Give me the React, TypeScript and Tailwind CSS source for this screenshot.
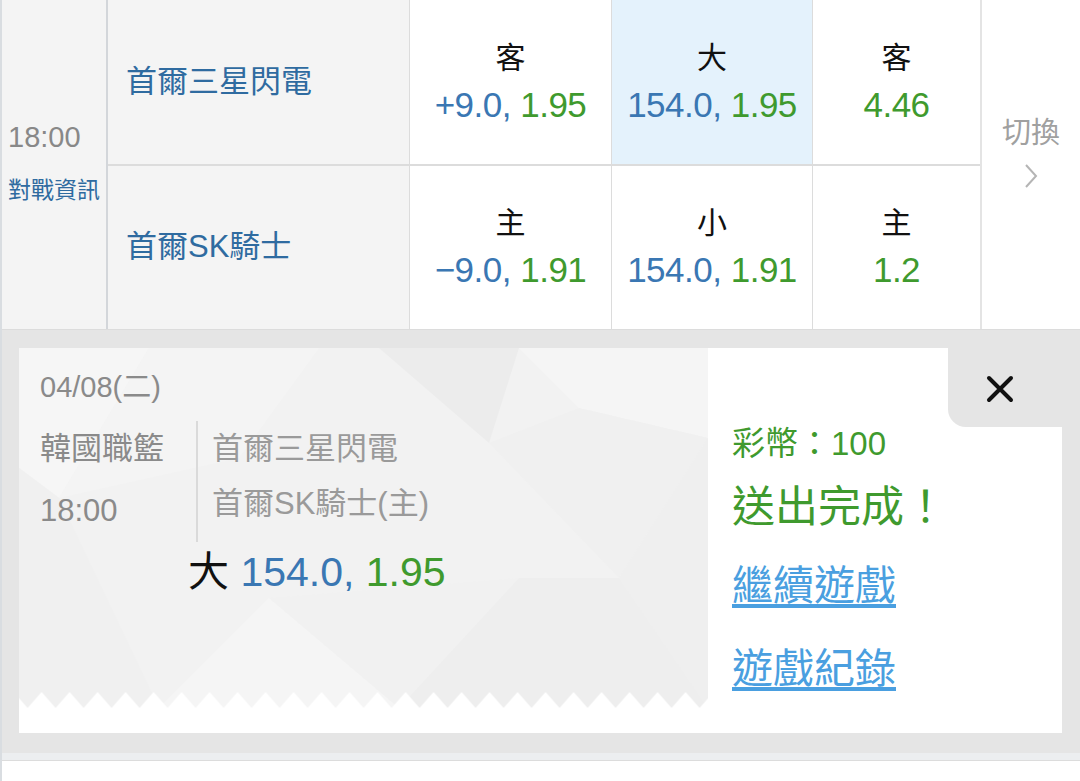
import React from "react";

const font = "font-['Liberation_Sans','Noto_Sans_CJK_TC',sans-serif]";

const blue = "text-[#3a77b3]";
const green = "text-[#3f9a2e]";

function OddsCell({
  label,
  line,
  price,
  width,
  active = false,
}: {
  label: string;
  line?: string;
  price: string;
  width: string;
  active?: boolean;
}) {
  return (
    <div
      className={`${width} flex flex-col items-center justify-center border-l border-[#dcdcdc] ${
        active ? "bg-[#e4f2fc]" : "bg-white"
      }`}
    >
      <span className="text-[30px] leading-[46px] text-[#111]">{label}</span>
      <span className="text-[35px] leading-[48px] tracking-[-0.5px]">
        {line && <span className={blue}>{line}, </span>}
        <span className={green}>{price}</span>
      </span>
    </div>
  );
}

function MatchRow({
  team,
  cells,
  last = false,
}: {
  team: string;
  cells: { label: string; line?: string; price: string; width: string; active?: boolean }[];
  last?: boolean;
}) {
  return (
    <div className={`flex flex-1 ${last ? "" : "border-b-2 border-[#dcdcdc]"}`}>
      <div className="w-[301px] flex items-center pl-[18px] bg-[#f4f4f4]">
        <span className="text-[31px] text-[#2f6ba0]">{team}</span>
      </div>
      {cells.map((c, i) => (
        <OddsCell key={i} {...c} />
      ))}
    </div>
  );
}

function TicketPattern() {
  return (
    <svg
      className="absolute inset-0"
      width="689"
      height="360"
      viewBox="0 0 689 360"
      preserveAspectRatio="none"
    >
      <rect width="689" height="360" fill="#f2f2f2" />
      <polygon points="0,0 130,0 40,150 0,120" fill="#f6f6f6" />
      <polygon points="130,0 300,0 220,110 40,150" fill="#f4f4f4" />
      <polygon points="360,0 500,0 470,95" fill="#ececec" />
      <polygon points="500,0 689,0 689,90 560,60" fill="#f5f5f5" />
      <polygon points="470,95 560,60 689,90 600,230" fill="#f0f0f0" />
      <polygon points="689,90 689,360 600,230" fill="#efefef" />
      <polygon points="0,120 40,150 140,360 0,360" fill="#f0f0f0" />
      <polygon points="140,360 250,250 380,360" fill="#f5f5f5" />
      <polygon points="250,250 500,230 380,360" fill="#f1f1f1" />
      <polygon points="500,230 600,230 689,360 380,360" fill="#eeeeee" />
    </svg>
  );
}

function Zigzag() {
  return (
    <svg width="689" height="16" className="block">
      <defs>
        <pattern id="zz" width="28" height="16" x="8.6" patternUnits="userSpaceOnUse">
          <polygon points="0,16 14,0 28,16" fill="#ffffff" />
        </pattern>
      </defs>
      <rect width="689" height="16" fill="url(#zz)" />
    </svg>
  );
}

export default function App() {
  return (
    <div className={`${font} w-[1080px] h-[781px] bg-white overflow-hidden border-l-2 border-[#d9dde1]`}>
      {/* ── odds table ── */}
      <div className="flex h-[330px] border-b border-[#dcdcdc]">
        <div className="w-[106px] bg-[#f4f4f4] flex flex-col justify-center pl-[6px] pb-[8px] border-r-2 border-[#d3d6da]">
          <span className="text-[29px] leading-[40px] text-[#888]">18:00</span>
          <span className="text-[23px] leading-[30px] mt-[18px] text-[#2f6ba0]">對戰資訊</span>
        </div>
        <div className="flex flex-col w-[872px]">
          <MatchRow
            team="首爾三星閃電"
            cells={[
              { label: "客", line: "+9.0", price: "1.95", width: "w-[202px]" },
              { label: "大", line: "154.0", price: "1.95", width: "w-[201px]", active: true },
              { label: "客", price: "4.46", width: "w-[168px]" },
            ]}
          />
          <MatchRow
            team="首爾SK騎士"
            last
            cells={[
              { label: "主", line: "−9.0", price: "1.91", width: "w-[202px]" },
              { label: "小", line: "154.0", price: "1.91", width: "w-[201px]" },
              { label: "主", price: "1.2", width: "w-[168px]" },
            ]}
          />
        </div>
        <div className="flex-1 flex flex-col items-center justify-center border-l-2 border-[#e4e4e4] pb-[28px]">
          <span className="text-[29px] leading-[40px] text-[#a0a0a0]">切換</span>
          <svg width="14" height="26" viewBox="0 0 14 26" className="mt-[10px]">
            <polyline points="2,2 12,13 2,24" fill="none" stroke="#b5b5b5" strokeWidth="2" />
          </svg>
        </div>
      </div>

      {/* ── bet receipt ── */}
      <div className="h-[423px] bg-[#e5e5e5] pt-[18px] pl-[17px] pr-[18px]">
        <div className="flex h-[385px]">
          <div className="relative w-[689px] flex flex-col">
            <TicketPattern />
            <div className="relative flex-1 pl-[21px] pt-[19px]">
              <div className="text-[29px] leading-[40px] text-[#8a8a8a]">04/08(二)</div>
              <div className="flex">
                <div className="w-[156px] mt-[11px] text-[31px] leading-[62px] text-[#8a8a8a]">
                  <div>韓國職籃</div>
                  <div>18:00</div>
                </div>
                <div className="mt-[14px] border-l-2 border-[#dadada] pl-[14px] text-[31px] leading-[55px] text-[#9a9a9a]">
                  <div>首爾三星閃電</div>
                  <div>首爾SK騎士(主)</div>
                </div>
              </div>
              <div className="ml-[148px] mt-[4px] text-[41px] leading-[52px]">
                <span className="text-[#111]">大 </span>
                <span className={blue}>154.0, </span>
                <span className={green}>1.95</span>
              </div>
            </div>
            <div className="relative">
              <Zigzag />
            </div>
            <div className="relative h-[25px] bg-white" />
          </div>

          <div className="flex-1 bg-white flex flex-col pl-[24px]">
            <div className="h-[79px] flex justify-end">
              <div className="w-[114px] h-full bg-[#e5e5e5] rounded-bl-[18px] flex items-center justify-center pr-[10px] pt-[2px]">
                <svg width="30" height="30" viewBox="0 0 30 30">
                  <path d="M4 4 L26 26 M26 4 L4 26" stroke="#111" strokeWidth="4" strokeLinecap="round" />
                </svg>
              </div>
            </div>
            <div className={`-mt-[3px] text-[33px] leading-[40px] ${green}`}>彩幣：100</div>
            <div className={`mt-[15px] text-[43px] leading-[56px] ${green}`}>送出完成！</div>
            <a className="mt-[23px] text-[41px] leading-[56px] text-[#4a9fe0] underline underline-offset-[4px] self-start">
              繼續遊戲
            </a>
            <a className="mt-[27px] text-[41px] leading-[56px] text-[#4a9fe0] underline underline-offset-[4px] self-start">
              遊戲紀錄
            </a>
          </div>
        </div>
      </div>
      <div className="h-[8px] bg-[#eceef0] border-b border-[#dcdcdc]" />
    </div>
  );
}
